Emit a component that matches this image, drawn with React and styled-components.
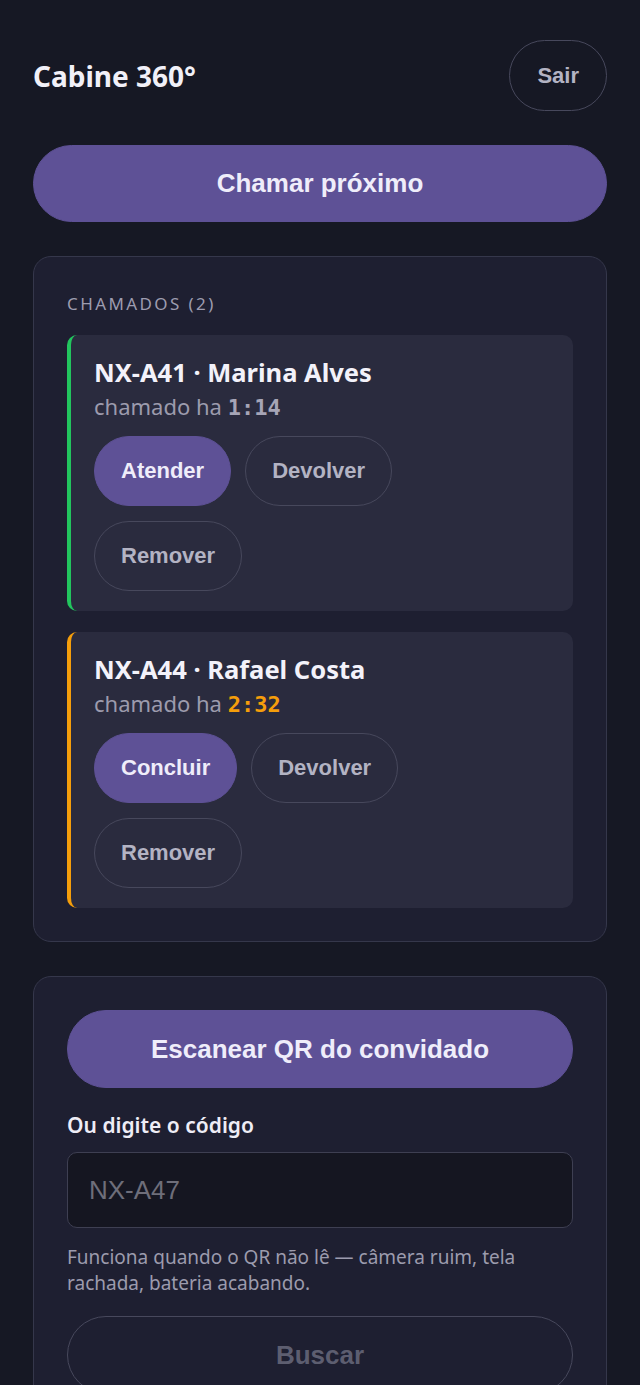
import styled, { createGlobalStyle } from "styled-components";

const GlobalStyle = createGlobalStyle`
  html, body {
    margin: 0;
    background: #161824;
  }
  body {
    font-family: "Noto Sans", sans-serif;
    color: #ecebf5;
  }
`;

const Page = styled.div`
  padding: 40px 33px 40px;
  display: flex;
  flex-direction: column;
  gap: 34px;
`;

const Header = styled.header`
  display: flex;
  align-items: center;
  justify-content: space-between;
`;

const Title = styled.h1`
  margin: 0;
  font-size: 28px;
  font-weight: 700;
  color: #f1f0f8;
`;

const Button = styled.button`
  font-family: "Liberation Sans", Arial, sans-serif;
  font-weight: 700;
  font-size: ${(p) => p.$size || 22}px;
  height: ${(p) => p.$height || 70}px;
  padding: 0 ${(p) => p.$pad || 26}px;
  border-radius: 999px;
  cursor: pointer;
  border: 1px solid ${(p) => (p.$primary ? "#5e5196" : "#47485c")};
  background: ${(p) => (p.$primary ? "#5e5196" : "transparent")};
  color: ${(p) => (p.$primary ? "#efedfa" : p.$disabled ? "#5d5e70" : "#b3b3c3")};
  width: ${(p) => (p.$block ? "100%" : "auto")};
`;

const Panel = styled.section`
  border: 1px solid #35374b;
  border-radius: 18px;
  background: #1e1f31;
  padding: 33px;
  display: flex;
  flex-direction: column;
`;

const SectionLabel = styled.div`
  font-size: 17px;
  letter-spacing: 2.4px;
  line-height: 24px;
  color: #9d9caf;
  margin: 2px 0 19px;
`;

const List = styled.div`
  display: flex;
  flex-direction: column;
  gap: 21px;
`;

const Item = styled.div`
  background: #2a2b3e;
  border-radius: 10px;
  border-left: 4px solid ${(p) => p.$accent};
  padding: 21px 23px 20px;
`;

const ItemTitle = styled.div`
  font-size: 25.5px;
  font-weight: 700;
  color: #f3f2fa;
  line-height: 32px;
`;

const ItemMeta = styled.div`
  font-size: 22px;
  color: #9c9bad;
  line-height: 36px;
  height: 36px;
  margin-bottom: 12px;
`;

const Time = styled.span`
  font-family: "DejaVu Sans Mono", monospace;
  font-weight: 700;
  font-size: 22px;
  line-height: 1;
  color: ${(p) => p.$color};
`;

const Actions = styled.div`
  display: flex;
  flex-wrap: wrap;
  gap: 15px 14px;
  max-width: 340px;
`;

const FieldLabel = styled.label`
  display: block;
  font-size: 21px;
  font-weight: 600;
  line-height: 28px;
  color: #eeedf6;
  margin: 23px 0 13px;
`;

const Input = styled.input`
  box-sizing: border-box;
  width: 100%;
  height: 76px;
  border-radius: 10px;
  border: 1px solid #3e3f52;
  background: #151621;
  padding: 0 21px;
  font-family: "Liberation Sans", Arial, sans-serif;
  font-size: 26px;
  color: #ecebf5;
  &::placeholder {
    color: #6e6e7a;
  }
`;

const Hint = styled.p`
  margin: 16px 0 20px;
  font-size: 19px;
  line-height: 26px;
  color: #9c9bad;
`;

const calls = [
  { code: "NX-A41", name: "Marina Alves", time: "1:14", accent: "#22c55e", timeColor: "#a6a5b6", main: "Atender" },
  { code: "NX-A44", name: "Rafael Costa", time: "2:32", accent: "#f59e0b", timeColor: "#f59e0b", main: "Concluir" },
];

export default function App() {
  return (
    <>
      <GlobalStyle />
      <Page>
        <Header>
          <Title>Cabine 360°</Title>
          <Button $pad={27} $height={71}>Sair</Button>
        </Header>
        <Button $primary $block $height={77} $size={26}>
          Chamar próximo
        </Button>
        <Panel>
          <SectionLabel>CHAMADOS (2)</SectionLabel>
          <List>
            {calls.map((c) => (
              <Item key={c.code} $accent={c.accent}>
                <ItemTitle>
                  {c.code} · {c.name}
                </ItemTitle>
                <ItemMeta>
                  chamado ha <Time $color={c.timeColor}>{c.time}</Time>
                </ItemMeta>
                <Actions>
                  <Button $primary>{c.main}</Button>
                  <Button>Devolver</Button>
                  <Button>Remover</Button>
                </Actions>
              </Item>
            ))}
          </List>
        </Panel>
        <Panel>
          <Button $primary $block $height={78} $size={26}>
            Escanear QR do convidado
          </Button>
          <FieldLabel>Ou digite o código</FieldLabel>
          <Input placeholder="NX-A47" />
          <Hint>Funciona quando o QR não lê — câmera ruim, tela rachada, bateria acabando.</Hint>
          <Button $block $disabled $height={78} $size={26} disabled>
            Buscar
          </Button>
        </Panel>
      </Page>
    </>
  );
}
